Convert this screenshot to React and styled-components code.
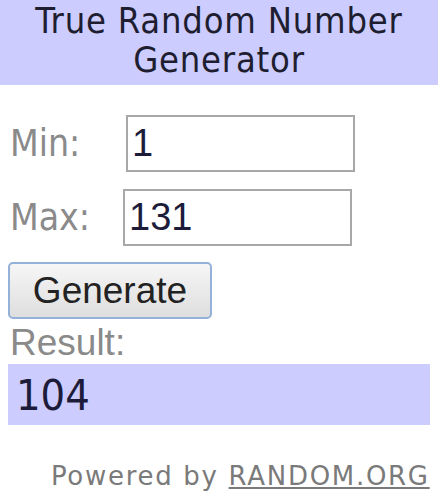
import React, { useState } from "react";
import styled, { createGlobalStyle } from "styled-components";

const GlobalStyle = createGlobalStyle`
  html, body {
    margin: 0;
    padding: 0;
    background: #ffffff;
  }
`;

const Widget = styled.div`
  width: 440px;
  height: 500px;
  display: flex;
  flex-direction: column;
  font-family: "DejaVu Sans Condensed", "DejaVu Sans", sans-serif;
  overflow: hidden;
`;

const Title = styled.div`
  width: 438px;
  height: 85px;
  box-sizing: border-box;
  padding-top: 1px;
  background-color: #ccccff;
  color: #1e1e30;
  font-size: 36px;
  letter-spacing: 0.8px;
  line-height: 39px;
  text-align: center;
`;

const Form = styled.div`
  display: flex;
  flex-direction: column;
  padding: 30px 0 0 8px;
`;

const Row = styled.div`
  display: flex;
  flex-direction: row;
  align-items: center;
  margin-bottom: ${(props) => props.gap || 0}px;
`;

const Label = styled.span`
  display: inline-block;
  width: ${(props) => props.width}px;
  padding-left: 2px;
  box-sizing: border-box;
  color: #8a8a8a;
  font-size: 37px;
`;

const Input = styled.input`
  width: 229px;
  height: 57px;
  box-sizing: border-box;
  border: 2px solid #a8a8a8;
  padding: 0 4px;
  font-family: "Liberation Sans", Arial, sans-serif;
  font-size: 38px;
  color: #1c1c3a;
  outline: none;
`;

const Button = styled.button`
  width: 204px;
  height: 57px;
  border: 2px solid #93b1d9;
  border-radius: 5px;
  background: linear-gradient(#f6f6f6, #dedede);
  font-family: "Liberation Sans", Arial, sans-serif;
  font-size: 37px;
  color: #222222;
  padding: 0;
`;

const ResultLabel = styled.div`
  padding: 4px 0 0 2px;
  height: 45px;
  box-sizing: border-box;
  font-family: "Liberation Sans", Arial, sans-serif;
  font-size: 37px;
  line-height: 40px;
  color: #8a8a8a;
`;

const ResultBox = styled.div`
  width: 422px;
  height: 61px;
  box-sizing: border-box;
  background-color: #ccccff;
  padding-left: 8px;
  font-size: 43px;
  line-height: 62px;
  color: #1c1c3a;
`;

const Footer = styled.div`
  width: 420px;
  margin-top: 36px;
  text-align: right;
  font-family: "DejaVu Sans", sans-serif;
  font-size: 26px;
  letter-spacing: 1.7px;
  color: #7a7a7a;
`;

const FooterLink = styled.a`
  color: #7a7a7a;
  text-decoration: underline;
  margin-right: -1.7px;
`;

export default function App() {
  const [min, setMin] = useState("1");
  const [max, setMax] = useState("131");
  const [result, setResult] = useState(104);

  const generate = () => {
    const lo = parseInt(min, 10);
    const hi = parseInt(max, 10);
    if (isNaN(lo) || isNaN(hi) || hi < lo) return;
    setResult(lo + Math.floor(Math.random() * (hi - lo + 1)));
  };

  return (
    <>
      <GlobalStyle />
      <Widget>
        <Title>
          True Random Number
          <br />
          Generator
        </Title>
        <Form>
          <Row gap={17}>
            <Label width={118}>Min:</Label>
            <Input value={min} onChange={(e) => setMin(e.target.value)} />
          </Row>
          <Row gap={16}>
            <Label width={115}>Max:</Label>
            <Input value={max} onChange={(e) => setMax(e.target.value)} />
          </Row>
          <Row>
            <Button onClick={generate}>Generate</Button>
          </Row>
          <ResultLabel>Result:</ResultLabel>
          <ResultBox>{result}</ResultBox>
          <Footer>
            Powered by <FooterLink href="#">RANDOM.ORG</FooterLink>
          </Footer>
        </Form>
      </Widget>
    </>
  );
}
